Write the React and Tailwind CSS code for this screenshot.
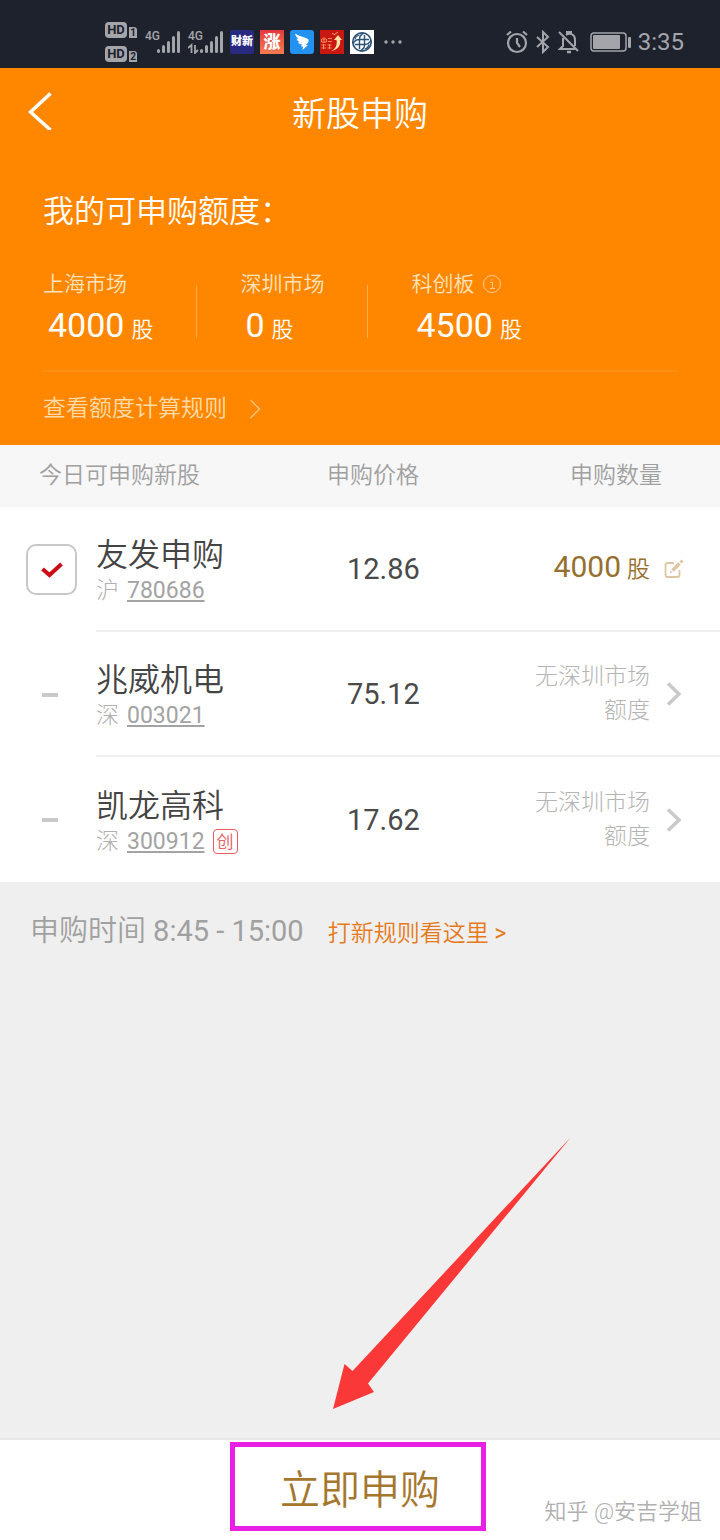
import React, { useState } from 'react';

const quotas = [
  { market: '上海市场', amount: 4000 },
  { market: '深圳市场', amount: 0 },
  { market: '科创板', amount: 4500, info: true },
];

const stocks = [
  { name: '友发申购', exchange: '沪', code: '780686', price: '12.86', amount: 4000 },
  { name: '兆威机电', exchange: '深', code: '003021', price: '75.12', reason: '无深圳市场额度' },
  { name: '凯龙高科', exchange: '深', code: '300912', price: '17.62', reason: '无深圳市场额度', tag: '创' },
];

const HdBadge = ({ sim }) => (
  <div className="flex items-end gap-[2px]">
    <span className="flex h-4 w-[22px] items-center justify-center rounded-[4px] bg-[#a3a5aa] text-[13px] leading-4 font-bold text-[#1e222d]">HD</span>
    <span className="flex h-[11px] w-2 items-center justify-center rounded-tr-[3px] bg-[#a3a5aa] text-[10px] leading-[11px] font-bold text-[#1e222d]">{sim}</span>
  </div>
);

const Signal = ({ data }) => (
  <div className="relative h-6 w-9">
    <span className="absolute top-0 left-0 text-xs leading-[12px] font-medium">4G</span>
    <svg viewBox="0 0 36 24" className="h-6 w-9" fill="currentColor">
      <rect x="12" y="19" width="3" height="4" rx="1.5" />
      <rect x="17" y="15" width="3" height="8" rx="1.5" />
      <rect x="22" y="11" width="3" height="12" rx="1.5" />
      <rect x="27" y="6" width="3" height="17" rx="1.5" />
      <rect x="32" y="1" width="3" height="22" rx="1.5" />
      {data && <path d="M3.500 23V15L0 18M7 15v8l3-3" fill="none" stroke="currentColor" strokeWidth="1.800" />}
    </svg>
  </div>
);

const StatusBar = () => (
  <div className="flex h-[68px] items-center justify-between bg-[#1e222d] pt-4 pr-9 pl-[105px] text-[#a3a5aa]">
    <div className="flex items-center">
      <div className="mr-2 flex flex-col gap-2">
        <HdBadge sim="1" />
        <HdBadge sim="2" />
      </div>
      <div className="flex gap-[7px]">
        <Signal />
        <Signal data />
      </div>
      <div className="ml-[6px] flex items-center gap-[6px]">
        <span className="flex h-6 w-6 items-center justify-center rounded-[2px] bg-[#272a80] text-[11px] leading-6 font-black text-white">财新</span>
        <span className="flex h-6 w-6 items-center justify-center bg-linear-to-b from-[#e4343e] to-[#f47a50] text-[17px] leading-6 font-black text-white">涨</span>
        <svg viewBox="0 0 24 24" className="h-6 w-6">
          <rect width="24" height="24" rx="3" fill="#2492f0" />
          <path d="M5 3.500c3 2 8 3.500 12 5 2 1 2 2 1 4l-2 2.500h2l-5.500 5 .5-3.500h-2l1-2c-2 0-3-1-4-2l2-.5C8 11.500 7 10 6.500 8.500l2 .5C7 7.500 5.500 6 5 3.500z" fill="#fff" />
        </svg>
        <svg viewBox="0 0 24 24" className="h-6 w-6">
          <rect width="24" height="24" fill="#ca1712" />
          <path d="M1.500 9h5v3h-5zM4 7v6M8 8.500h4M8 11.500h4M1.500 15h4.500M1.500 18h4.500M3.500 14v5M7.500 15h4M7.500 18h4M9.500 14v5" fill="none" stroke="#ef8a59" strokeWidth="1" />
          <path d="M11 21c7-1 10-6 9-11h2l-4-5-4 5h2.500c1 5-1 9-5.500 11z" fill="#ffe3a8" />
          <path d="M12 3.500l3 1M14 5l4-3" stroke="#efa069" />
        </svg>
        <svg viewBox="0 0 24 24" className="h-6 w-6">
          <rect width="24" height="24" fill="#fff" />
          <g fill="none" stroke="#2c5278" strokeWidth="1.700">
            <circle cx="12" cy="12" r="9.200" />
            <path
              d="M9.500 19V9q0-4 4.500-6M14.500 5v10q0 4-4.500 6M5 14.500h10q4 0 6-4.500M19 9.500H9q-4 0-6 4.500"
              strokeWidth="1.400"
            />
            <path d="M9.500 5q-4 1-4.500 4.500M19 14.500q-1 4-4.500 4.500" strokeWidth="1.200" />
          </g>
        </svg>
      </div>
      <svg viewBox="0 0 18 4" className="ml-[10px] h-1 w-[18px]" fill="currentColor">
        <circle cx="2" cy="2" r="1.700" />
        <circle cx="9" cy="2" r="1.700" />
        <circle cx="16" cy="2" r="1.700" />
      </svg>
    </div>
    <div className="flex items-center">
      <svg viewBox="0 0 22 24" className="mr-2 h-6 w-[22px]" fill="none" stroke="currentColor" strokeWidth="2.200">
        <circle cx="11" cy="13" r="9" />
        <path d="M11 8v5l3 4M1 5l4-3.500M21 5l-4-3.500" />
      </svg>
      <svg viewBox="0 0 14 24" className="mr-2 h-6 w-[14px]" fill="none" stroke="currentColor" strokeWidth="2">
        <path d="M1 7l11 10-5 5V2l5 5L1 17" />
      </svg>
      <svg viewBox="0 0 22 24" className="mr-[10px] h-6 w-[22px]" fill="none" stroke="currentColor" strokeWidth="2">
        <path d="M1 2l19 19M5 8v8l-3 3h15M8 5c5-3 9 0 9 5v6M9 4V2h4v2" />
        <path d="M9 22h4" strokeWidth="2.500" />
      </svg>
      <svg viewBox="0 0 41 20" className="mr-[7px] h-5 w-[41px]">
        <rect x="1" y="1" width="35" height="18" rx="3" fill="none" stroke="currentColor" strokeWidth="1.500" />
        <rect x="3" y="3" width="27" height="14" rx="1" fill="currentColor" />
        <rect x="38" y="5" width="3" height="11" rx="1" fill="currentColor" />
      </svg>
      <span className="text-2xl leading-6">3:35</span>
    </div>
  </div>
);

const QuotaHeader = () => (
  <header className="bg-[#ff8700] pb-5 text-white">
    <div className="grid grid-cols-[1fr_auto_1fr] items-start px-7 pt-[22px]">
      <button type="button" aria-label="返回" className="w-6">
        <svg viewBox="0 0 24 40" className="h-10 w-6" fill="none" stroke="currentColor" strokeWidth="3.500">
          <path d="M22.500 3.500L2.500 22l20 18" />
        </svg>
      </button>
      <h1 className="text-[34px] leading-[48px] font-[350]">新股申购</h1>
    </div>
    <div className="px-[43px]">
      <h2 className="mt-[50px] text-[31px] leading-[48px] font-[350]">我的可申购额度：</h2>
      <div className="mt-[34px] flex items-end">
        {quotas.map((q, i) => (
          <React.Fragment key={q.market}>
            {i > 0 && <div className="mx-[43px] mb-3 h-[53px] w-px bg-[#ffac50]" />}
            <div>
              <div className="flex items-center gap-2 text-[21px] leading-7 font-[350] text-[#ffe3bd]">
                {q.market}
                {q.info && (
                  <svg viewBox="0 0 20 20" className="h-5 w-5" fill="none" stroke="#ffcb8a">
                    <circle cx="10" cy="10" r="8.500" />
                    <path d="M8 8.500h2.500v6M8 14.500h5M10 5v1.500" />
                  </svg>
                )}
              </div>
              <div className="mt-[7px] pl-[5px] text-[34px] leading-10">
                {q.amount}
                <span className="ml-[7px] text-[22px] font-[350]">股</span>
              </div>
            </div>
          </React.Fragment>
        ))}
      </div>
      <div className="mt-5 h-[2px] bg-[#ff8d0f]" />
      <a href="#quota-rules" className="mt-[21px] flex items-center gap-[22px] text-[23px] leading-8 font-[350] text-[#ffdcaa]">
        查看额度计算规则
        <svg viewBox="0 0 12 20" className="h-5 w-3" fill="none" stroke="#ffc078" strokeWidth="1.500">
          <path d="M1.500 1l9 9-9 9" />
        </svg>
      </a>
    </div>
  </header>
);

const StockRow = ({ stock, last }) => {
  const [checked, setChecked] = useState(true);
  const line = last ? '' : 'border-b-2 border-[#efefef]';

  return (
    <tr className="h-[125px]">
      <td className="pl-[26px]">
        {stock.amount ? (
          <label className="relative flex h-[51px] w-[51px] items-center justify-center">
            <input
              type="checkbox"
              aria-label={stock.name}
              checked={checked}
              onChange={(e) => setChecked(e.target.checked)}
              className="h-full w-full appearance-none rounded-[10px] border-2 border-[#c8c8c8] bg-white"
            />
            {checked && (
              <svg viewBox="0 0 22 16" className="pointer-events-none absolute h-4 w-[22px]" fill="none" stroke="#cb0d18" strokeWidth="4">
                <path d="M1.500 7l7 6L20.500 2" />
              </svg>
            )}
          </label>
        ) : (
          <div className="ml-4 h-1 w-4 bg-[#c9c9c9]" />
        )}
      </td>
      <td className={`${line} pt-1`}>
        <div className="text-[32px] leading-10 font-[350] text-[#444]">{stock.name}</div>
        <div className="flex items-center gap-2 text-[23px] leading-8 font-light text-[#b0b0b0]">
          {stock.exchange}
          <a href={`#${stock.code}`} className="font-normal text-[#a3a3a3] underline decoration-2 underline-offset-2">{stock.code}</a>
          {stock.tag && (
            <span className="flex h-[25px] w-[25px] items-center justify-center rounded-[4px] border border-[#ee5b60] text-[17px] leading-5 font-normal text-[#e5686d]">{stock.tag}</span>
          )}
        </div>
      </td>
      <td className={`${line} pl-5 text-[29px] leading-10 text-[#4a4a4a]`}>{stock.price}</td>
      <td className={`${line} pr-9`}>
        {stock.amount ? (
          <div className="flex items-center justify-end gap-[14px] text-[30px] leading-10 text-[#96702e]">
            <div>
              {stock.amount}
              <span className="ml-[6px] text-[23px] font-[350]">股</span>
            </div>
            <button type="button" aria-label="修改数量">
              <svg viewBox="0 0 20 20" className="h-5 w-5" fill="none" stroke="#dcc7a2" strokeWidth="1.800">
                <path d="M10 4H3.500Q1.500 4 1.500 6v10q0 2 2 2h10q2 0 2-2v-5" />
                <path d="M8.500 11.500l7-7" strokeWidth="3.500" />
                <path d="M16.500 3.500l2-2" strokeWidth="3" />
                <path d="M6 14l2.500-.5-2-2z" fill="#dcc7a2" stroke="none" />
              </svg>
            </button>
          </div>
        ) : (
          <div className="flex items-center justify-end gap-4 pr-[2px] text-right text-[23px] leading-[34px] font-light text-[#b4b4b4]">
            <span className="w-[116px]">{stock.reason}</span>
            <svg viewBox="0 0 16 24" className="h-6 w-4" fill="none" stroke="#c9c9c9" strokeWidth="3.500">
              <path d="M2 1.500L13 12 2 22.500" />
            </svg>
          </div>
        )}
      </td>
    </tr>
  );
};

const App = () => (
  <div className="flex min-h-screen flex-col bg-[#efefef] font-[Roboto,'Noto_Sans_CJK_SC',sans-serif]">
    <StatusBar />
    <QuotaHeader />

    <table className="w-full table-fixed border-separate border-spacing-0 bg-white text-left">
      <colgroup>
        <col className="w-24" />
        <col className="w-[231px]" />
        <col className="w-[160px]" />
        <col />
      </colgroup>
      <thead>
        <tr className="h-[62px] bg-[#f7f7f7] text-[23px] leading-8 text-[#a0a0a0]">
          <th colSpan={2} className="pl-[39px] font-[350]">今日可申购新股</th>
          <th className="font-[350]">申购价格</th>
          <th className="pr-[58px] text-right font-[350]">申购数量</th>
        </tr>
      </thead>
      <tbody>
        {stocks.map((stock, i) => (
          <StockRow key={stock.code} stock={stock} last={i === stocks.length - 1} />
        ))}
      </tbody>
    </table>

    <main className="flex flex-1 flex-col justify-between">
      <div className="flex items-baseline gap-6 pt-[29px] pl-[30px] font-[350]">
        <p className="text-[29px] leading-10 text-[#a0a0a0]">
          申购时间 <span className="font-normal">8:45 - 15:00</span>
        </p>
        <a href="#rules" className="text-[23px] leading-8 text-[#e67a1b]">
          打新规则看这里 <span className="font-normal">&gt;</span>
        </a>
      </div>
      {/* Arrow pointing at the submit button */}
      <svg viewBox="0 0 240 273" className="mb-7 ml-[332px] h-[273px] w-[240px]" fill="#fb3838">
        <path d="M239 0L20.500 234l-8-7L1 272l41-17-6-8.500z" />
      </svg>
    </main>

    <footer className="relative flex h-[102px] items-start justify-center border-t-2 border-[#e8e8e8] bg-white pt-[2px]">
      <button type="button" className="mr-[5px] h-[89px] w-64 border-[5px] border-[#ea1fe5] pt-2 pl-[5px] text-[40px] leading-[56px] font-[350] text-[#a5762d]">
        立即申购
      </button>
      <span className="absolute right-[18px] bottom-3 text-[22px] leading-8 font-[350] text-[#b0b0b0]">知乎 @安吉学姐</span>
    </footer>
  </div>
);

export default App;
